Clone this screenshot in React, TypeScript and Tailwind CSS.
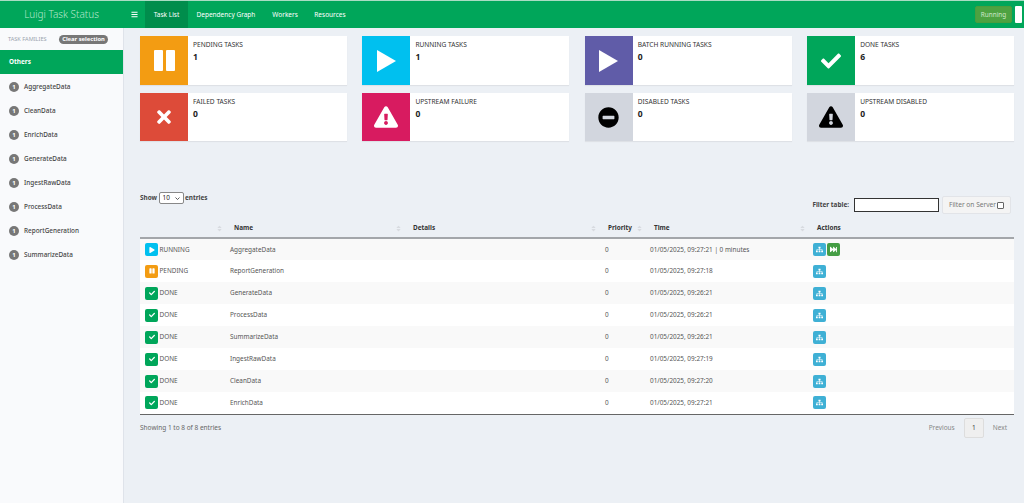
import type { ReactNode } from "react";
import {
  FaBars,
  FaCheck,
  FaExclamationTriangle,
  FaFastForward,
  FaMinusCircle,
  FaPause,
  FaPlay,
  FaSitemap,
  FaSort,
  FaTimes,
} from "react-icons/fa";

const families = [
  "AggregateData",
  "CleanData",
  "EnrichData",
  "GenerateData",
  "IngestRawData",
  "ProcessData",
  "ReportGeneration",
  "SummarizeData",
];

const PauseBars = () => (
  <svg viewBox="0 0 21 21" className="h-[21px] w-[21px]" fill="currentColor">
    <rect x="0" y="0" width="9" height="21" rx="1" />
    <rect x="12" y="0" width="9" height="21" rx="1" />
  </svg>
);

const PlayTriangle = () => (
  <svg viewBox="0 0 19 22" className="h-[22px] w-[19px]" fill="currentColor">
    <path d="M0 0L19 11L0 22Z" />
  </svg>
);

const cards: { label: string; value: number; bg: string; fg: string; icon: ReactNode }[] = [
  { label: "Pending Tasks", value: 1, bg: "bg-[#f39c12]", fg: "text-white", icon: <PauseBars /> },
  { label: "Running Tasks", value: 1, bg: "bg-[#00c0ef]", fg: "text-white", icon: <PlayTriangle /> },
  { label: "Batch Running Tasks", value: 0, bg: "bg-[#605ca8]", fg: "text-white", icon: <PlayTriangle /> },
  { label: "Done Tasks", value: 6, bg: "bg-[#00a65a]", fg: "text-white", icon: <FaCheck className="h-[20px] w-[20px]" /> },
  { label: "Failed Tasks", value: 0, bg: "bg-[#dd4b39]", fg: "text-white", icon: <FaTimes className="h-[20px] w-[16px]" /> },
  { label: "Upstream Failure", value: 0, bg: "bg-[#d81b60]", fg: "text-white", icon: <FaExclamationTriangle className="h-[22px] w-[24px]" /> },
  { label: "Disabled Tasks", value: 0, bg: "bg-[#d2d6de]", fg: "text-black", icon: <FaMinusCircle className="h-[21px] w-[21px]" /> },
  { label: "Upstream Disabled", value: 0, bg: "bg-[#d2d6de]", fg: "text-black", icon: <FaExclamationTriangle className="h-[22px] w-[24px]" /> },
];

type Status = "RUNNING" | "PENDING" | "DONE";

const rows: { status: Status; name: string; time: string; forward?: boolean }[] = [
  { status: "RUNNING", name: "AggregateData", time: "01/05/2025, 09:27:21 | 0 minutes", forward: true },
  { status: "PENDING", name: "ReportGeneration", time: "01/05/2025, 09:27:18" },
  { status: "DONE", name: "GenerateData", time: "01/05/2025, 09:26:21" },
  { status: "DONE", name: "ProcessData", time: "01/05/2025, 09:26:21" },
  { status: "DONE", name: "SummarizeData", time: "01/05/2025, 09:26:21" },
  { status: "DONE", name: "IngestRawData", time: "01/05/2025, 09:27:19" },
  { status: "DONE", name: "CleanData", time: "01/05/2025, 09:27:20" },
  { status: "DONE", name: "EnrichData", time: "01/05/2025, 09:27:21" },
];

const StatusIcon = ({ status }: { status: Status }) => {
  if (status === "RUNNING") {
    return (
      <span className="flex h-[13px] w-[13px] items-center justify-center rounded-[2px] bg-[#00c0ef] text-white">
        <FaPlay className="h-[6px] w-[6px]" />
      </span>
    );
  }
  if (status === "PENDING") {
    return (
      <span className="flex h-[13px] w-[13px] items-center justify-center rounded-[2px] bg-[#f39c12] text-white">
        <FaPause className="h-[6px] w-[6px]" />
      </span>
    );
  }
  return (
    <span className="flex h-[13px] w-[13px] items-center justify-center rounded-[2px] bg-[#00a65a] text-white">
      <FaCheck className="h-[6px] w-[6px]" />
    </span>
  );
};

const HeaderCell = ({ label, sort = true }: { label?: string; sort?: boolean }) => (
  <th className="relative h-[19px] pl-[8px] text-left align-middle font-bold text-[#333]">
    {label}
    {sort && <FaSort className="absolute right-[4px] top-[6px] h-[7px] w-[5px] text-[#d8dbe0]" />}
  </th>
);

export default function App() {
  return (
    <div className="flex h-screen flex-col overflow-hidden bg-[#ecf0f5] font-['Noto_Sans',sans-serif] text-[6.4px] text-[#333]">
      <header className="flex h-[28px] shrink-0 items-stretch border-t-[1.5px] border-[#a9dcc3] bg-[#00a65a] text-white">
        <div className="flex w-[123px] items-center justify-center text-[10px] font-light text-[#b6e6cd]">
          Luigi Task Status
        </div>
        <div className="flex w-[22px] items-center justify-center">
          <FaBars className="h-[7px] w-[7px]" />
        </div>
        <nav className="flex flex-1 items-stretch text-[6.5px]">
          <a className="flex w-[43px] items-center justify-center bg-[#008d4c]">Task List</a>
          <a className="flex items-center pl-[8.5px] pr-[8.5px]">Dependency Graph</a>
          <a className="flex items-center pl-[8.5px] pr-[8.5px]">Workers</a>
          <a className="flex items-center px-[8px]">Resources</a>
        </nav>
        <div className="flex items-center gap-[3px] pr-[2px]">
          <span className="flex h-[17px] w-[37px] items-center justify-center rounded-[2px] border border-[#4a9d3d] bg-[#4da241] text-[#cfe8cb]">
            Running
          </span>
          <span className="h-[17px] w-[7px] rounded-[1px] bg-white" />
        </div>
      </header>

      <div className="flex min-h-0 flex-1">
        <aside className="w-[124px] shrink-0 border-r border-[#dfe3ea] bg-[#f9fafc]">
          <div className="flex h-[22px] items-center justify-between pl-[8px] pr-[15px]">
            <span className="text-[5.6px] text-[#9aa3ad]">TASK FAMILIES</span>
            <span className="flex h-[9px] w-[49px] items-center justify-center rounded-full bg-[#777] text-[5.8px] font-bold text-white">
              Clear selection
            </span>
          </div>
          <div className="mb-[1px] flex h-[24px] items-center bg-[#00a65a] pl-[9px] font-bold text-white">Others</div>
          {families.map((name) => (
            <div key={name} className="flex h-[24px] items-center gap-[5px] pl-[9px] font-medium text-[#444]">
              <span className="flex h-[10px] w-[10px] items-center justify-center rounded-full bg-[#777] text-[6px] font-bold text-white">
                1
              </span>
              {name}
            </div>
          ))}
        </aside>

        <main className="min-w-0 flex-1 pl-[16px] pr-[10px] pt-[8px]">
          <div className="grid grid-cols-4 grid-rows-[49px_48px] gap-x-[15.5px] gap-y-[8px]">
            {cards.map((card) => (
              <div key={card.label} className="flex bg-white shadow-[0_1px_1px_rgba(0,0,0,0.06)]">
                <div className={`flex w-[48px] shrink-0 items-center justify-center ${card.bg} ${card.fg}`}>{card.icon}</div>
                <div className="pl-[5px] pt-[4px]">
                  <div className="text-[6.6px] uppercase leading-[10px] text-[#333]">{card.label}</div>
                  <div className="mt-[1px] text-[8.5px] font-bold leading-[11px] text-[#222]">{card.value}</div>
                </div>
              </div>
            ))}
          </div>

          <div className="mt-[51px] flex h-[27px] items-start justify-between pr-[3px]">
            <div className="flex items-center font-bold text-[#444]">
              Show
              <span className="mx-[1.5px] flex h-[12px] w-[25px] items-center justify-between rounded-[2px] border border-[#888] bg-white px-[3px] font-normal text-[#222]">
                10
                <svg viewBox="0 0 10 6" className="h-[3px] w-[5px]" fill="none" stroke="#333" strokeWidth="1.6">
                  <path d="M1 1l4 4 4-4" />
                </svg>
              </span>
              entries
            </div>
            <div className="mt-[4px] flex items-center">
              <span className="mr-[5px] font-bold text-[#444]">Filter table:</span>
              <span className="mr-[3px] h-[14px] w-[85px] border border-[#333] bg-white" />
              <span className="flex h-[18px] w-[69px] items-center justify-center gap-[1px] rounded-[2px] border border-[#e2e4e8] bg-[#f4f4f4] text-[6.6px] text-[#777]">
                Filter on Server
                <span className="h-[7px] w-[7px] rounded-[1px] border border-[#666] bg-white" />
              </span>
            </div>
          </div>

          <table className="w-[874px] table-fixed border-collapse">
            <colgroup>
              <col className="w-[86px]" />
              <col className="w-[179px]" />
              <col className="w-[195px]" />
              <col className="w-[46px]" />
              <col className="w-[163px]" />
              <col className="w-[205px]" />
            </colgroup>
            <thead>
              <tr className="border-b-2 border-[#a3a6aa]">
                <HeaderCell />
                <HeaderCell label="Name" />
                <HeaderCell label="Details" />
                <HeaderCell label="Priority" />
                <HeaderCell label="Time" />
                <HeaderCell label="Actions" sort={false} />
              </tr>
            </thead>
            <tbody className="border-b border-[#666]">
              {rows.map((row, i) => (
                <tr key={row.name} className={`h-[22px] text-[#555] ${i % 2 === 0 ? "bg-[#f9f9f9]" : "bg-white"}`}>
                  <td className="pl-[5px]">
                    <div className="flex items-center gap-[1.5px]">
                      <StatusIcon status={row.status} />
                      {row.status}
                    </div>
                  </td>
                  <td className="pl-[4px]">{row.name}</td>
                  <td />
                  <td className="pl-[5px]">0</td>
                  <td className="pl-[4px]">{row.time}</td>
                  <td className="pl-[4px]">
                    <div className="flex items-center gap-[1px]">
                      <span className="flex h-[13px] w-[13px] items-center justify-center rounded-[2px] bg-[#3fb0d5] text-white">
                        <FaSitemap className="h-[7px] w-[7px]" />
                      </span>
                      {row.forward && (
                        <span className="flex h-[13px] w-[13px] items-center justify-center rounded-[2px] bg-[#449d44] text-white">
                          <FaFastForward className="h-[7px] w-[7px]" />
                        </span>
                      )}
                    </div>
                  </td>
                </tr>
              ))}
            </tbody>
          </table>

          <div className="mt-[3px] flex items-center justify-between pr-[7px] text-[6.5px] text-[#666]">
            <span>Showing 1 to 8 of 8 entries</span>
            <div className="flex items-center text-[#888]">
              <span className="mr-[9px]">Previous</span>
              <span className="flex h-[20px] w-[20px] items-center justify-center rounded-[2px] border border-[#ddd] bg-[#efefef] text-[#444]">
                1
              </span>
              <span className="ml-[9px]">Next</span>
            </div>
          </div>
        </main>
      </div>
    </div>
  );
}
